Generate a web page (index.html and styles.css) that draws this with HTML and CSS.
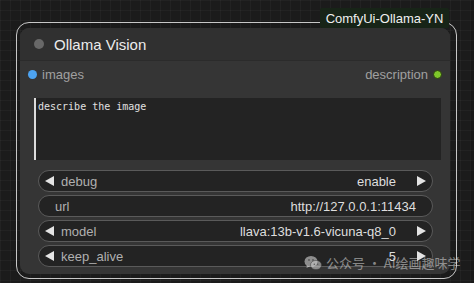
FILE: index.html
```html
<!DOCTYPE html>
<html>
<head>
<meta charset="utf-8">
<link rel="stylesheet" href="styles.css">
</head>
<body>
<div class="canvas">
  <div class="outline">
    <div class="node">
      <div class="title">
        <span class="title-dot"></span>
        <span class="title-text">Ollama Vision</span>
      </div>
      <div class="io">
        <div class="slot"><span class="dot blue"></span><span>images</span></div>
        <div class="slot"><span>description</span><span class="dot green"></span></div>
      </div>
      <div class="textarea">describe the image</div>
      <div class="widgets">
        <div class="widget"><span class="arr left"></span><span class="label">debug</span><span class="value">enable</span><span class="arr right"></span></div>
        <div class="widget plain"><span class="label">url</span><span class="value">http://127.0.0.1:11434</span></div>
        <div class="widget"><span class="arr left"></span><span class="label">model</span><span class="value">llava:13b-v1.6-vicuna-q8_0</span><span class="arr right"></span></div>
        <div class="widget"><span class="arr left"></span><span class="label">keep_alive</span><span class="value">5</span><span class="arr right"></span></div>
      </div>
    </div>
  </div>
  <div class="badge">ComfyUi-Ollama-YN</div>
  <div class="watermark">
    <svg width="18" height="16" viewBox="0 0 18 16">
      <ellipse cx="7" cy="6.5" rx="6.5" ry="5.5" fill="rgba(230,230,230,0.55)"/>
      <path d="M3 10.5 L2.5 13 L5.5 11.5 Z" fill="rgba(230,230,230,0.55)"/>
      <ellipse cx="12" cy="10" rx="5.5" ry="4.6" fill="rgba(200,200,200,0.6)" stroke="rgba(60,60,60,0.6)" stroke-width="0.8"/>
      <circle cx="5" cy="5" r="0.9" fill="#555"/>
      <circle cx="9" cy="5" r="0.9" fill="#555"/>
      <circle cx="10.3" cy="9.2" r="0.7" fill="#555"/>
      <circle cx="13.7" cy="9.2" r="0.7" fill="#555"/>
    </svg>
    <span>公众号 · AI绘画趣味学</span>
  </div>
</div>
</body>
</html>
```

FILE: styles.css
```css
* { box-sizing: border-box; }
html, body { margin: 0; padding: 0; }
body {
  font-family: "Liberation Sans", Arial, "Noto Sans CJK SC", sans-serif;
  background: #1c1c1c;
}
.canvas {
  position: relative;
  width: 474px;
  height: 283px;
  overflow: hidden;
  padding: 22px 0 0 16px;
  background-color: #1b1b1b;
  background-image:
    linear-gradient(to right, rgba(255,255,255,0.03) 1px, transparent 1px),
    linear-gradient(to bottom, rgba(255,255,255,0.03) 1px, transparent 1px);
  background-size: 10px 10px;
}
.outline {
  width: 441px;
  height: 257px;
  border: 1px solid #c8c8c8;
  border-radius: 13px;
  padding: 5px 6px 3px 3px;
}
.node {
  width: 430px;
  height: 246px;
  background: #353535;
  border-radius: 9px;
  overflow: hidden;
}
.title {
  height: 33px;
  background: #303030;
  border-bottom: 1px solid #2b2b2b;
  display: flex;
  align-items: center;
  padding-left: 14px;
}
.title-dot {
  width: 10px;
  height: 10px;
  border-radius: 50%;
  background: #686868;
}
.title-text {
  margin-left: 10px;
  color: #ececec;
  font-size: 15px;
}
.io {
  height: 26px;
  display: flex;
  justify-content: space-between;
  align-items: center;
  padding: 0 8px 0 8px;
}
.slot {
  display: flex;
  align-items: center;
  gap: 5px;
  color: #a0a0a0;
  font-size: 13px;
}
.dot {
  width: 9px;
  height: 9px;
  border-radius: 50%;
}
.dot.blue { background: #4da3f0; }
.dot.green { background: #7ec72a; border: 1px solid #2a3a10; }
.textarea {
  margin: 11px 0 0 14px;
  width: 407px;
  height: 62px;
  background: #232323;
  border-left: 2px solid #dcdcdc;
  color: #e0e0e0;
  font-family: "DejaVu Sans Mono", monospace;
  font-size: 10px;
  padding: 3px 0 0 2px;
}
.widgets {
  margin: 10px 0 0 18px;
  width: 395px;
  display: flex;
  flex-direction: column;
  gap: 3px;
}
.widget {
  height: 22px;
  border: 1px solid #5a5a5a;
  border-radius: 11px;
  background: #232323;
  display: flex;
  align-items: center;
  padding: 0 6px 0 6px;
  font-size: 13px;
}
.widget .label {
  color: #b0b0b0;
  margin-left: 7px;
  flex: 1;
}
.widget .value {
  color: #dedede;
  margin-right: 21px;
}
.widget.plain .label { margin-left: 10px; }
.widget.plain .value { margin-right: 10px; }
.arr {
  width: 0;
  height: 0;
  border-top: 5.5px solid transparent;
  border-bottom: 5.5px solid transparent;
}
.arr.left { border-right: 9px solid #e4e4e4; }
.arr.right { border-left: 9px solid #e4e4e4; }
.badge {
  position: absolute;
  left: 320px;
  top: 8px;
  width: 129px;
  height: 20px;
  background: #172417;
  color: #f0f0f0;
  font-size: 13px;
  display: flex;
  align-items: center;
  justify-content: center;
  border-radius: 2px;
}
.watermark {
  position: absolute;
  left: 304px;
  top: 253px;
  display: flex;
  align-items: center;
  gap: 4px;
  color: rgba(225,225,225,0.55);
  font-size: 13px;
  font-family: "Noto Sans CJK SC", sans-serif;
}
```
